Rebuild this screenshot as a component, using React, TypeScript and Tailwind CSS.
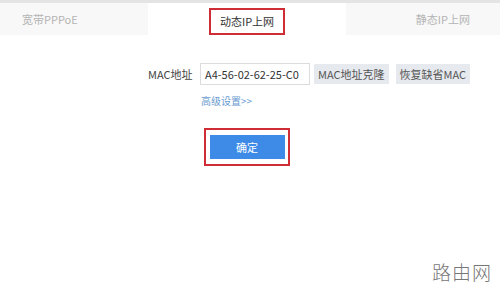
export default function App() {
  const font = { fontFamily: '"Noto Sans CJK SC", "Noto Sans", sans-serif' };
  return (
    <div className="w-[500px] h-[292px] bg-white relative overflow-hidden" style={font}>
      <div className="h-[3px] bg-[#e4e4e4]" />
      <div className="flex h-[32px] text-[11px]">
        <div className="w-[148px] bg-[#f8f8f8] flex items-center pl-[22px] text-[#b4b4b4]">宽带PPPoE</div>
        <div className="w-[198px] bg-white flex items-center justify-center">
          <div className="border-2 border-[#cf2d36] h-[27px] mt-[5px] px-[9px] flex items-center text-[#333]">动态IP上网</div>
        </div>
        <div className="flex-1 bg-[#f8f8f8] flex items-center justify-end pr-[30px] text-[#b4b4b4]">静态IP上网</div>
      </div>
      <div className="flex items-center mt-[28px] ml-[148px] text-[11px] text-[#444]">
        <span className="w-[52px]">MAC地址</span>
        <div className="w-[110px] h-[22px] border border-[#dcdcdc] flex items-center px-[4px] text-[#333]">A4-56-02-62-25-C0</div>
        <div className="ml-[4px] h-[20px] bg-[#e6e9ee] px-[4px] flex items-center text-[#555]">MAC地址克隆</div>
        <div className="ml-[7px] h-[20px] bg-[#e6e9ee] px-[4px] flex items-center text-[#555]">恢复缺省MAC</div>
      </div>
      <div className="ml-[201px] mt-[8px] text-[10px] text-[#6a9bd1]">高级设置&gt;&gt;</div>
      <div className="ml-[204px] mt-[20px] w-[86px] h-[38px] border-2 border-[#cf2d36] flex items-center justify-center">
        <div className="w-[75px] h-[24px] bg-[#3d8be6] text-white text-[11px] flex items-center justify-center">确定</div>
      </div>
      <div className="absolute right-[8px] bottom-[6px] text-[19px] text-[#777] font-light tracking-[1px]" style={font}>路由网</div>
    </div>
  );
}
